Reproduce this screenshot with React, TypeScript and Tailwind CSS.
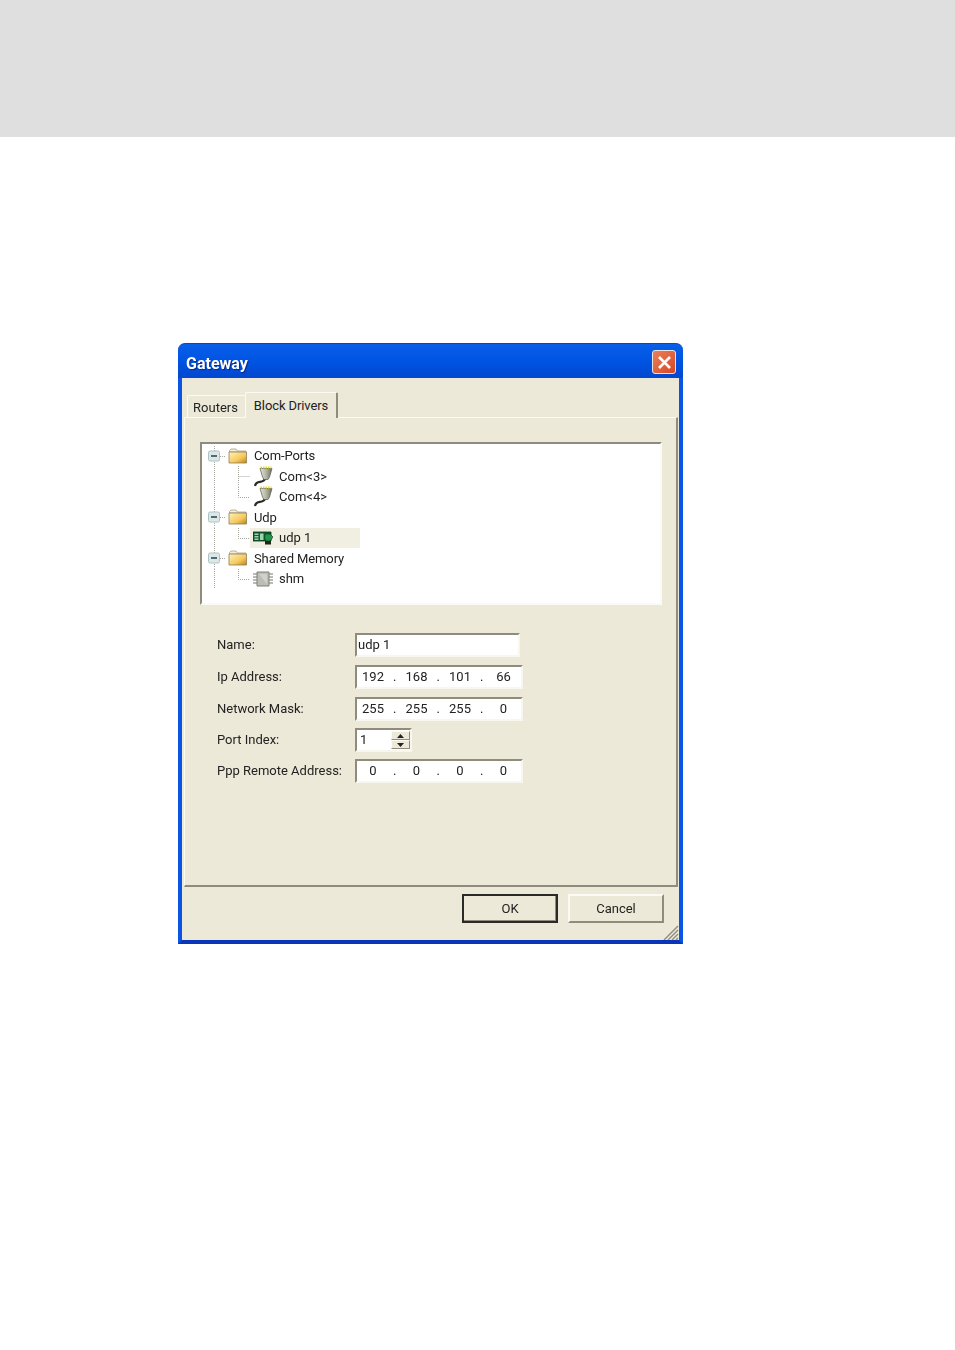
const font = "font-['Roboto',sans-serif]"

function Folder() {
  return (
    <svg width="20" height="16" viewBox="0 0 20 16" className="shrink-0">
      <defs>
        <linearGradient id="fold" x1="0" y1="0" x2="1" y2="1">
          <stop offset="0" stopColor="#fff2b8" />
          <stop offset="0.6" stopColor="#f5c95f" />
          <stop offset="1" stopColor="#bd8218" />
        </linearGradient>
      </defs>
      <path d="M1.500 4V2.500L3 1h5l1.500 2H18v1z" fill="#f6efd6" stroke="#a89f85" strokeWidth="0.8" />
      <path d="M1 4h17.500v11H1z" fill="url(#fold)" stroke="#8f7f55" strokeWidth="0.8" />
    </svg>
  )
}

function Plug() {
  return (
    <svg width="20" height="21" viewBox="0 0 20 21" className="shrink-0">
      <defs>
        <linearGradient id="plug" x1="0" y1="0" x2="1" y2="0">
          <stop offset="0" stopColor="#e6e6dc" />
          <stop offset="0.5" stopColor="#b4b6a6" />
          <stop offset="1" stopColor="#6f7165" />
        </linearGradient>
      </defs>
      <path d="M12 12c0 3-2 3.500-5 3.800-3 .3-4.500 1.200-5 4.200" fill="none" stroke="#2c2d28" strokeWidth="2.200" />
      <path d="M7 2.500h12l-2.500 8.500-1.500 2.500h-4l-1.500-2.500z" fill="url(#plug)" stroke="#55584c" strokeWidth="0.7" />
      <path d="M7.500 1.500h11" stroke="#e4dc20" strokeWidth="2" strokeDasharray="1.500 1" />
    </svg>
  )
}

function Card() {
  return (
    <svg width="20" height="14" viewBox="0 0 20 14" className="shrink-0">
      <path d="M0 1h18v9H0z" fill="#0f5f30" stroke="#083019" strokeWidth="0.8" />
      <path d="M1.500 2.500h4v1.500h-4zM1.500 5h4v1.500h-4zM1.500 7.500h4V9h-4zM7 2.500h3.500v6.500H7z" fill="#9fd4ae" />
      <path d="M12 3h5l3 3-3 4h-4l-1.500-3z" fill="#1c9a4a" stroke="#083019" strokeWidth="0.6" />
      <path d="M12 10h6v3.500h-6z" fill="#23231a" />
    </svg>
  )
}

function Chip() {
  return (
    <svg width="20" height="16" viewBox="0 0 20 16" className="shrink-0">
      <path d="M0 3h4M0 6h4M0 9h4M0 12h4M16 3h4M16 6h4M16 9h4M16 12h4" stroke="#77796f" strokeWidth="1" />
      <path d="M4 1h12v14H4z" fill="#bdbdb5" stroke="#7f8078" strokeWidth="1" />
      <path d="M6 3h8v10z" fill="#d2d2cc" />
    </svg>
  )
}

function GroupRow({ label }: { label: string }) {
  return (
    <div className="flex h-[20.5px] items-center">
      <svg width="26" height="20.5" viewBox="0 0 26 20.500" className="shrink-0">
        <path d="M12.500 0v20.500" stroke="#a8a8a0" strokeDasharray="1 1" fill="none" />
        <path d="M18 10.500h6" stroke="#a8a8a0" strokeDasharray="1 1" fill="none" />
        <rect x="6.500" y="5" width="11" height="10" rx="1.500" fill="#dfe6e4" stroke="#a9c6c6" />
        <path d="M9 10h6" stroke="#1f3f5f" strokeWidth="1.500" />
      </svg>
      <Folder />
      <span className="ml-[6px] text-[13px] leading-none tracking-[-0.1px] text-[#222]">{label}</span>
    </div>
  )
}

function ChildRow({ label, icon, selected, last }: { label: string; icon: React.ReactNode; selected?: boolean; last?: boolean }) {
  return (
    <div className="flex h-[20.5px] items-center">
      <svg width="48" height="20.5" viewBox="0 0 48 20.500" className="shrink-0">
        <path d="M12.500 0v20.500" stroke="#a8a8a0" strokeDasharray="1 1" fill="none" />
        <path d={last ? "M36.500 0v10.500h11" : "M36.500 0v20.500M36.500 10.500h11"} stroke="#a8a8a0" strokeDasharray="1 1" fill="none" />
      </svg>
      <div className={selected ? "flex h-full w-[110px] items-center bg-[#f1efe2] pl-[3px]" : "flex h-full w-[110px] items-center pl-[3px]"}>
        {icon}
        <span className="ml-[6px] text-[13px] leading-none text-[#222]">{label}</span>
      </div>
    </div>
  )
}

function Sunken({ className, children }: { className: string; children: React.ReactNode }) {
  return (
    <div className={`flex h-6 items-center border-2 border-t-[#8f8c7d] border-r-[#f7f6ef] border-b-[#f7f6ef] border-l-[#8f8c7d] bg-white text-[13px] text-[#222] ${className}`}>
      {children}
    </div>
  )
}

function IpField({ parts }: { parts: string[] }) {
  return (
    <Sunken className="w-[168px]">
      {parts.map((part, i) => (
        <div key={i} className="flex">
          <span className="w-8 text-center">{part}</span>
          {i < 3 && <span className="w-[11.5px] text-center">.</span>}
        </div>
      ))}
    </Sunken>
  )
}

function FormRow({ label, className, children }: { label: string; className?: string; children: React.ReactNode }) {
  return (
    <div className={`flex h-6 items-center ${className ?? ""}`}>
      <span className="w-[138px] text-[13px] text-[#222]">{label}</span>
      {children}
    </div>
  )
}

function SpinButton({ up }: { up?: boolean }) {
  return (
    <div className="flex h-[9px] w-[19px] items-center justify-center border border-t-[#fbfaf5] border-r-[#8f8c7d] border-b-[#8f8c7d] border-l-[#fbfaf5] bg-[#ece9d8]">
      <svg width="7" height="4" viewBox="0 0 7 4">
        <path d={up ? "M3.500 0L7 4H0z" : "M0 0h7L3.500 4z"} fill="#222" />
      </svg>
    </div>
  )
}

export default function App() {
  return (
    <div className={`h-[1350px] bg-white ${font}`}>
      <div className="h-[137px] bg-[#dfdfdf]" />
      <div className="pt-[206px] pl-[178px]">
        <div className="w-[505px] blur-[0.35px]">
          <div className="flex h-[35px] items-center justify-between rounded-t-[7px] border-t border-[#0a45c8] bg-gradient-to-b from-[#0a5fe8] via-[#0054e3] to-[#0347cf] pt-[2px] pr-[7px] pl-2">
            <span className="mt-[3px] text-[16px] font-bold text-white [text-shadow:1px_1px_1px_#0a2a80]">Gateway</span>
            <div className="flex h-6 w-6 items-center justify-center rounded-[3px] border border-[#e8e4e0] bg-gradient-to-br from-[#e8805c] to-[#d8451f]">
              <svg width="15" height="15" viewBox="0 0 15 15">
                <path d="M2 2l11 11M13 2L2 13" stroke="#fff" strokeWidth="2.600" />
              </svg>
            </div>
          </div>

          <div className="h-[566px] border-x-4 border-b-4 border-x-[#0a55e6] border-b-[#0a35b8] bg-[#ece9d8]">
            <div className="flex h-[39px] items-end pl-[5px]">
              <div className="flex h-[22px] w-[58px] items-center justify-center rounded-t-[2px] border-t border-l border-[#fbfaf5] pt-[2px] pr-[2px] text-[13px] text-[#222]">
                Routers
              </div>
              <div className="relative z-10 -mb-px flex h-[26px] w-[93px] items-start justify-center rounded-t-[2px] border-t border-r-2 border-l border-t-[#fbfaf5] border-r-[#8f8c7d] border-l-[#fbfaf5] bg-[#ece9d8] pt-[3px] text-[13px] tracking-[-0.1px] text-[#222]">
                Block Drivers
              </div>
            </div>

            <div className="ml-[2px] h-[470px] w-[494px] border-t border-r-2 border-b-2 border-l border-t-[#fbfaf5] border-r-[#8f8c7d] border-b-[#8f8c7d] border-l-[#fbfaf5] pt-6 pl-[15px]">
              <div className="h-[163px] w-[462px] border-2 border-t-[#8f8c7d] border-r-[#fbfaf5] border-b-[#fbfaf5] border-l-[#8f8c7d] bg-white pt-[1.5px]">
                <GroupRow label="Com-Ports" />
                <ChildRow label="Com<3>" icon={<Plug />} />
                <ChildRow label="Com<4>" icon={<Plug />} last />
                <GroupRow label="Udp" />
                <ChildRow label="udp 1" icon={<Card />} selected last />
                <GroupRow label="Shared Memory" />
                <ChildRow label="shm" icon={<Chip />} last />
              </div>

              <div className="mt-7 ml-[17px] flex flex-col gap-[7px]">
                <FormRow label="Name:">
                  <Sunken className="w-[165px] pl-[1px]">udp 1</Sunken>
                </FormRow>
                <FormRow label="Ip Address:" className="mt-px">
                  <IpField parts={["192", "168", "101", "66"]} />
                </FormRow>
                <FormRow label="Network Mask:" className="mt-px">
                  <IpField parts={["255", "255", "255", "0"]} />
                </FormRow>
                <FormRow label="Port Index:">
                  <Sunken className="w-[57px] justify-between pr-0 pl-[3px]">
                    <span>1</span>
                    <div className="flex flex-col">
                      <SpinButton up />
                      <SpinButton />
                    </div>
                  </Sunken>
                </FormRow>
                <FormRow label="Ppp Remote Address:">
                  <IpField parts={["0", "0", "0", "0"]} />
                </FormRow>
              </div>
            </div>

            <div className="mt-[7px] flex justify-end gap-[10px] pr-[15px]">
              <button className="h-[29px] w-24 border-2 border-[#2a2a26] bg-[#ece9d8] pt-px text-[13px] text-[#222] shadow-[inset_-1px_-1px_0_#8f8c7d]">
                OK
              </button>
              <button className="h-[29px] w-24 border-2 border-t-[#fbfaf5] border-r-[#8f8c7d] border-b-[#8f8c7d] border-l-[#fbfaf5] bg-[#ece9d8] pt-px text-[13px] text-[#222]">
                Cancel
              </button>
            </div>
            <div className="mt-[2px] flex justify-end">
              <svg width="16" height="15" viewBox="0 0 16 15">
                <path d="M15 1L1 15M15 5L5 15M15 9L9 15M15 13L13 15" stroke="#8f8c7d" strokeWidth="1.400" />
              </svg>
            </div>
          </div>
        </div>
      </div>
    </div>
  )
}
